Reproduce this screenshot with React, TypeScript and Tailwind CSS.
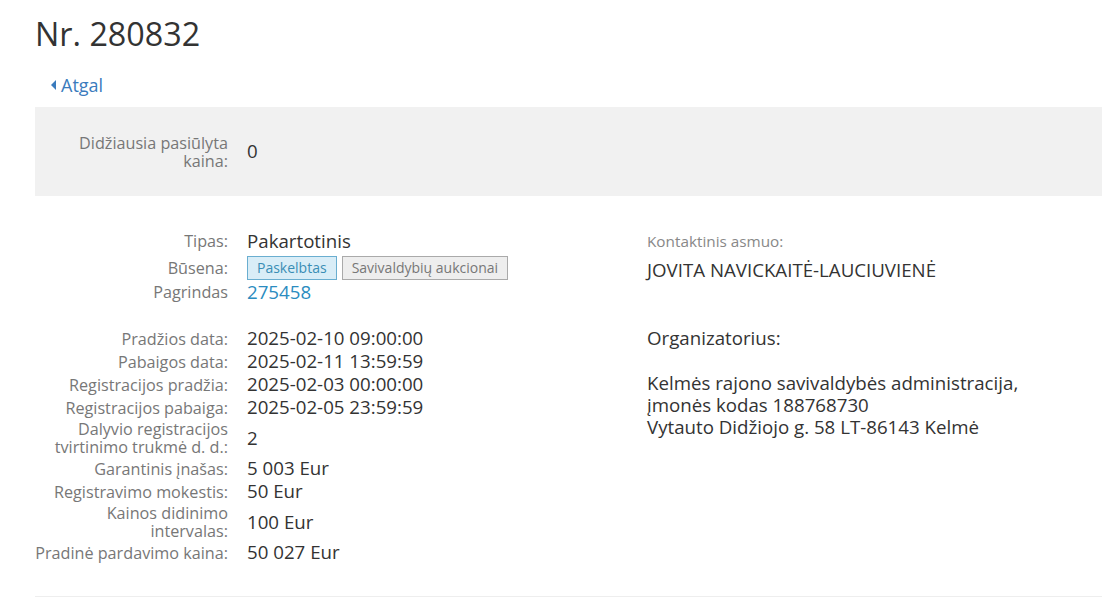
const font = { fontFamily: '"Open Sans", "DejaVu Sans", sans-serif' };

type Row = { label: string[]; value: string; tall?: boolean };

const dates: Row[] = [
  { label: ["Pradžios data:"], value: "2025-02-10 09:00:00" },
  { label: ["Pabaigos data:"], value: "2025-02-11 13:59:59" },
  { label: ["Registracijos pradžia:"], value: "2025-02-03 00:00:00" },
  { label: ["Registracijos pabaiga:"], value: "2025-02-05 23:59:59" },
  {
    label: ["Dalyvio registracijos", "tvirtinimo trukmė d. d.:"],
    value: "2",
    tall: true,
  },
  { label: ["Garantinis įnašas:"], value: "5 003 Eur" },
  { label: ["Registravimo mokestis:"], value: "50 Eur" },
  { label: ["Kainos didinimo", "intervalas:"], value: "100 Eur", tall: true },
  { label: ["Pradinė pardavimo kaina:"], value: "50 027 Eur" },
];

const Label = ({ lines }: { lines: string[] }) => (
  <div className="flex w-[193px] shrink-0 flex-col items-end text-[16.2px] leading-[18px] text-[#777]">
    {lines.map((l) => (
      <div key={l} className="whitespace-nowrap">
        {l}
      </div>
    ))}
  </div>
);

export default function App() {
  return (
    <div className="min-h-screen bg-white pl-[35px] text-[#333]" style={font}>
      <div className="flex h-[66px] items-center">
        <h1 className="text-[32.3px] leading-[40px] text-[#333]">Nr. 280832</h1>
      </div>

      <div className="flex h-[38px] items-center pl-[16px]">
        <a href="#" className="flex items-center gap-[5px] text-[18px] text-[#3a7bbd]">
          <span className="h-0 w-0 border-y-[5px] border-r-[5px] border-y-transparent border-r-[#3a7bbd]" />
          Atgal
        </a>
      </div>

      <div className="mt-[3px] flex h-[89px] items-center gap-[19px] bg-[#f1f1f1]">
        <Label lines={["Didžiausia pasiūlyta", "kaina:"]} />
        <div className="text-[18.7px]">0</div>
      </div>

      <div className="flex pt-[33px]">
        <div className="w-[612px] shrink-0">
          <div className="flex h-[24px] items-center gap-[19px]">
            <Label lines={["Tipas:"]} />
            <div className="text-[18.7px]">Pakartotinis</div>
          </div>
          <div className="flex h-[29px] items-center gap-[19px]">
            <Label lines={["Būsena:"]} />
            <div className="flex gap-[5px]">
              <span className="border border-[#6aaed0] bg-[#d9edf7] px-[9px] text-[14px] leading-[22px] text-[#3a8db5]">
                Paskelbtas
              </span>
              <span className="border border-[#aaa] bg-[#eee] px-[9px] text-[14px] leading-[22px] text-[#777]">
                Savivaldybių aukcionai
              </span>
            </div>
          </div>
          <div className="flex h-[20px] items-center gap-[19px]">
            <Label lines={["Pagrindas"]} />
            <a href="#" className="text-[18.7px] text-[#2b8cc0]">
              275458
            </a>
          </div>

          <div className="pt-[25px]">
            {dates.map((r) => (
              <div
                key={r.label[0]}
                className={`flex items-center gap-[19px] ${r.tall ? "h-[38px]" : "h-[23px]"}`}
              >
                <Label lines={r.label} />
                <div className="text-[18.7px]">{r.value}</div>
              </div>
            ))}
          </div>
        </div>

        <div className="flex-1">
          <div className="flex h-[24px] items-center text-[15.3px] text-[#888]">
            Kontaktinis asmuo:
          </div>
          <div className="flex h-[34px] items-center text-[18.7px]">
            JOVITA NAVICKAITĖ-LAUCIUVIENĖ
          </div>
          <div className="mt-[39px] flex h-[24px] items-center text-[18.7px]">
            Organizatorius:
          </div>
          <div className="mt-[22px] text-[18.7px] leading-[22px]">
            <div>Kelmės rajono savivaldybės administracija,</div>
            <div>įmonės kodas 188768730</div>
            <div>Vytauto Didžiojo g. 58 LT-86143 Kelmė</div>
          </div>
        </div>
      </div>

      <div className="mt-[32px] border-b border-[#eee]" />
    </div>
  );
}
